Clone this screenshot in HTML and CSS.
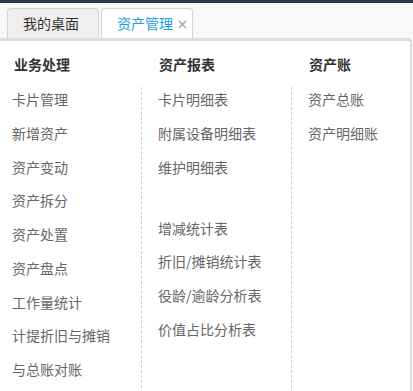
FILE: index.html
```html
<!DOCTYPE html>
<html lang="zh-CN">
<head>
    <meta charset="UTF-8">
    <meta name="viewport" content="width=device-width, initial-scale=1.0">
    <title>资产管理</title>
    <link rel="stylesheet" href="styles.css">
</head>
<body>
    <div class="topbar"></div>
    <div class="tabbar">
        <div class="tab">我的桌面</div>
        <div class="tab active">资产管理
            <svg class="close" width="9" height="9" viewBox="0 0 9 9">
                <path d="M1 1L8 8M8 1L1 8" stroke="#a0a0a0" stroke-width="1.3" fill="none"/>
            </svg>
        </div>
    </div>
    <div class="panel">
        <div class="menu-col first">
            <h3>业务处理</h3>
            <ul>
                <li>卡片管理</li>
                <li>新增资产</li>
                <li>资产变动</li>
                <li>资产拆分</li>
                <li>资产处置</li>
                <li>资产盘点</li>
                <li>工作量统计</li>
                <li>计提折旧与摊销</li>
                <li>与总账对账</li>
            </ul>
        </div>
        <div class="menu-col">
            <h3>资产报表</h3>
            <ul>
                <li>卡片明细表</li>
                <li>附属设备明细表</li>
                <li>维护明细表</li>
                <li class="group-start">增减统计表</li>
                <li>折旧/摊销统计表</li>
                <li>役龄/逾龄分析表</li>
                <li>价值占比分析表</li>
            </ul>
        </div>
        <div class="menu-col">
            <h3>资产账</h3>
            <ul>
                <li>资产总账</li>
                <li>资产明细账</li>
            </ul>
        </div>
    </div>
</body>
</html>
```

FILE: styles.css
```css
body {
    margin: 0;
    font-family: "Noto Sans CJK SC", "Microsoft YaHei", sans-serif;
    font-size: 14px;
    background: #fff;
    overflow: hidden;
}
.topbar {
    height: 3px;
    background: #2b3a4a;
}
.tabbar {
    height: 35px;
    box-sizing: border-box;
    padding: 5px 0 0 7px;
    background: #f8f8f8;
    display: flex;
    gap: 2px;
}
.tab {
    width: 92px;
    height: 30px;
    box-sizing: border-box;
    padding-left: 15px;
    border: 1px solid #d4d4d4;
    border-bottom: none;
    border-radius: 4px 4px 0 0;
    background: #efefef;
    color: #333;
    line-height: 29px;
    display: flex;
    align-items: center;
}
.tab.active {
    background: #fff;
    color: #1e9ee0;
}
.close {
    margin-left: 5px;
    margin-top: 1px;
}
.panel {
    width: 412px;
    min-height: 360px;
    box-sizing: border-box;
    border-top: 3px solid #dcdcdc;
    border-right: 2px solid #dcdcdc;
    border-top-right-radius: 4px;
    padding: 13px 0 0 12px;
    display: grid;
    grid-template-columns: 129px 150px 1fr;
}
.menu-col {
    display: flex;
    flex-direction: column;
}
.menu-col h3 {
    margin: 0 0 13px 0;
    padding-left: 18px;
    font-size: 14px;
    line-height: 20px;
    color: #333;
    font-weight: bold;
}
.menu-col.first h3 {
    padding-left: 2px;
}
.menu-col ul {
    flex: 1;
    list-style: none;
    margin: 0;
    padding: 0 0 0 16px;
    border-left: 1px dashed #d0d0d0;
}
.menu-col.first ul {
    padding-left: 0;
    border-left: none;
}
.menu-col li {
    line-height: 24px;
    margin-bottom: 9.75px;
    color: #666;
}
.menu-col li.group-start {
    margin-top: 37px;
}
```
